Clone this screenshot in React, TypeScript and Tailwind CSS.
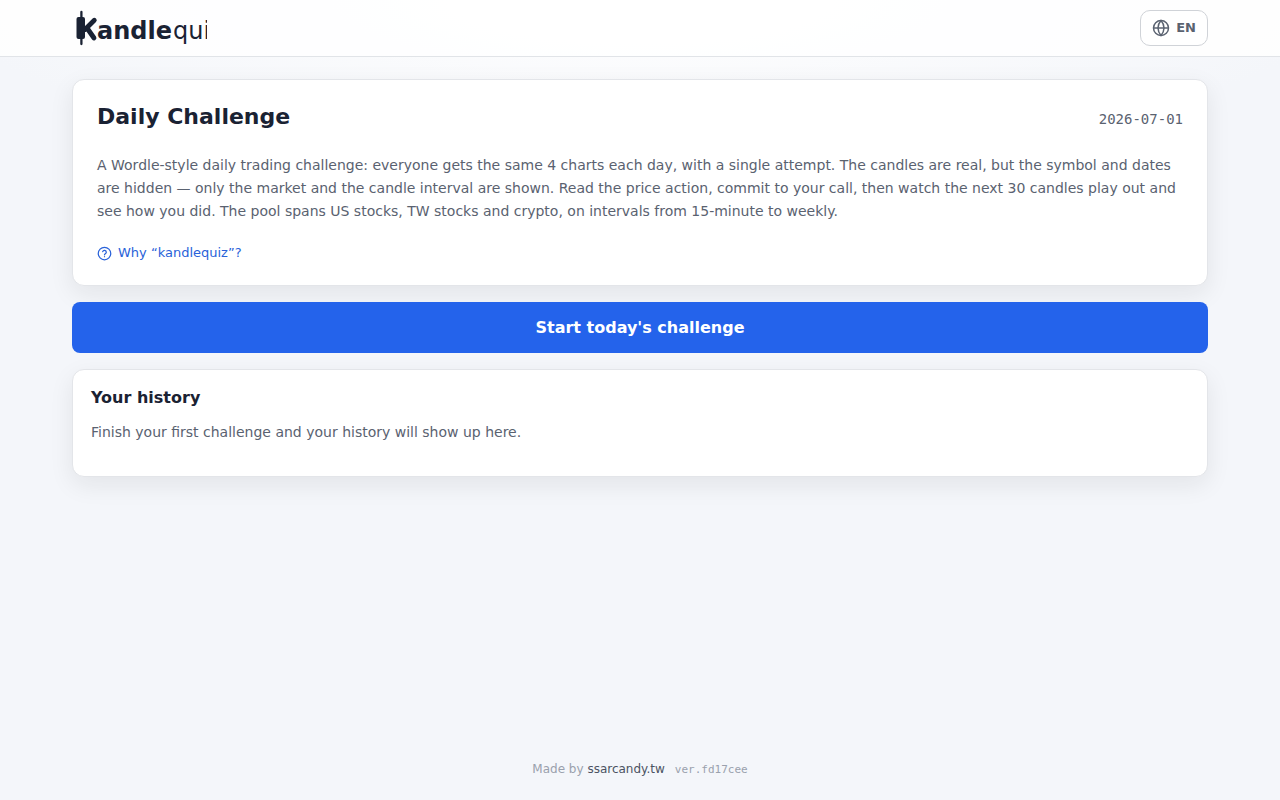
import type { ReactNode } from 'react'

function Logo() {
  return (
    <svg width="135" height="40" viewBox="0 0 135 40" role="img" aria-label="Kandlequiz" className="block overflow-hidden">
      <g stroke="#1a2233" strokeLinecap="round" fill="none">
        <path d="M9.4 4v32" strokeWidth="2.3" />
        <path d="M22.3 12.3L13 21.5M15 20l7 10" strokeWidth="4.8" />
      </g>
      <rect x="4.5" y="9" width="8.5" height="22" rx="2" fill="#1a2233" />
      <text x="25" y="31" fontSize="24" fill="#1a2233">
        <tspan className="font-bold">andle</tspan>
        <tspan dx="1">quiz</tspan>
      </text>
    </svg>
  )
}

function GlobeIcon() {
  return (
    <svg width="18" height="18" viewBox="0 0 24 24" fill="none" stroke="currentColor" strokeWidth="2" aria-hidden="true">
      <circle cx="12" cy="12" r="10" />
      <path d="M2 12h20" />
      <path d="M12 2a15.3 15.3 0 0 1 4 10 15.3 15.3 0 0 1-4 10 15.3 15.3 0 0 1-4-10 15.3 15.3 0 0 1 4-10z" />
    </svg>
  )
}

function HelpIcon() {
  return (
    <svg
      width="15"
      height="15"
      viewBox="0 0 24 24"
      fill="none"
      stroke="currentColor"
      strokeWidth="2"
      strokeLinecap="round"
      strokeLinejoin="round"
      aria-hidden="true"
    >
      <circle cx="12" cy="12" r="10" />
      <path d="M9.1 9a3 3 0 0 1 5.8 1c0 2-2.9 2.5-2.9 4" />
      <path d="M12 17h.01" />
    </svg>
  )
}

function Card({ className, children }: { className: string; children: ReactNode }) {
  return (
    <section
      className={`rounded-xl border border-[#e3e5e9] bg-white shadow-[0_8px_24px_rgba(20,25,20,0.08)] ${className}`}
    >
      {children}
    </section>
  )
}

export default function App() {
  return (
    <div className="flex min-h-screen flex-col bg-[#f4f6fa] bg-[radial-gradient(ellipse_700px_160px_at_50%_0,#ffffff,#f4f6fa)] bg-no-repeat font-['DejaVu_Sans',sans-serif] text-[#1a2233]">
      <header className="border-b border-[#e1e4e8] bg-white/85">
        <div className="mx-auto flex h-14 max-w-[1200px] items-center justify-between px-8">
          <a href="#">
            <Logo />
          </a>
          <button
            type="button"
            className="flex h-9 items-center gap-1.5 rounded-[10px] border border-[#d0d3d8] bg-white px-[11px] text-[13px] leading-5 font-bold text-[#5a6270]"
          >
            <GlobeIcon />
            EN
          </button>
        </div>
      </header>

      <main className="mx-auto flex w-full max-w-[1200px] flex-1 flex-col gap-4 px-8 pt-[22px]">
        <Card className="p-6">
          <div className="flex items-baseline justify-between">
            <h1 className="text-[22px] leading-[26px] font-bold">Daily Challenge</h1>
            <time dateTime="2026-07-01" className="font-['DejaVu_Sans_Mono',monospace] text-sm text-[#5a6270]">
              2026-07-01
            </time>
          </div>
          <p className="mt-6 text-sm leading-[23px] text-[#5a6270]">
            A Wordle-style daily trading challenge: everyone gets the same 4 charts each day, with a single attempt. The
            candles are real, but the symbol and dates are hidden — only the market and the candle interval are shown.
            Read the price action, commit to your call, then watch the next 30 candles play out and see how you did. The
            pool spans US stocks, TW stocks and crypto, on intervals from 15-minute to weekly.
          </p>
          <button type="button" className="mt-[22px] flex items-center gap-1.5 text-[13px] leading-4 text-[#2962d9]">
            <HelpIcon />
            Why “kandlequiz”?
          </button>
        </Card>

        <button type="button" className="h-[51px] rounded-lg bg-[#2463eb] text-base font-bold text-white">
          Start today's challenge
        </button>

        <Card className="px-[18px] pt-4 pb-8">
          <h2 className="text-base leading-6 font-bold">Your history</h2>
          <p className="mt-[11px] text-sm leading-[23px] text-[#5a6270]">
            Finish your first challenge and your history will show up here.
          </p>
        </Card>
      </main>

      <footer className="flex items-baseline justify-center pb-[21px] text-xs leading-[18px] text-[#9aa1ad]">
        <span>
          Made by{' '}
          <a href="#" className="text-[#4b5362]">
            ssarcandy.tw
          </a>
        </span>
        <span className="ml-2.5 font-['DejaVu_Sans_Mono',monospace] text-[11px]">ver.fd17cee</span>
      </footer>
    </div>
  )
}
